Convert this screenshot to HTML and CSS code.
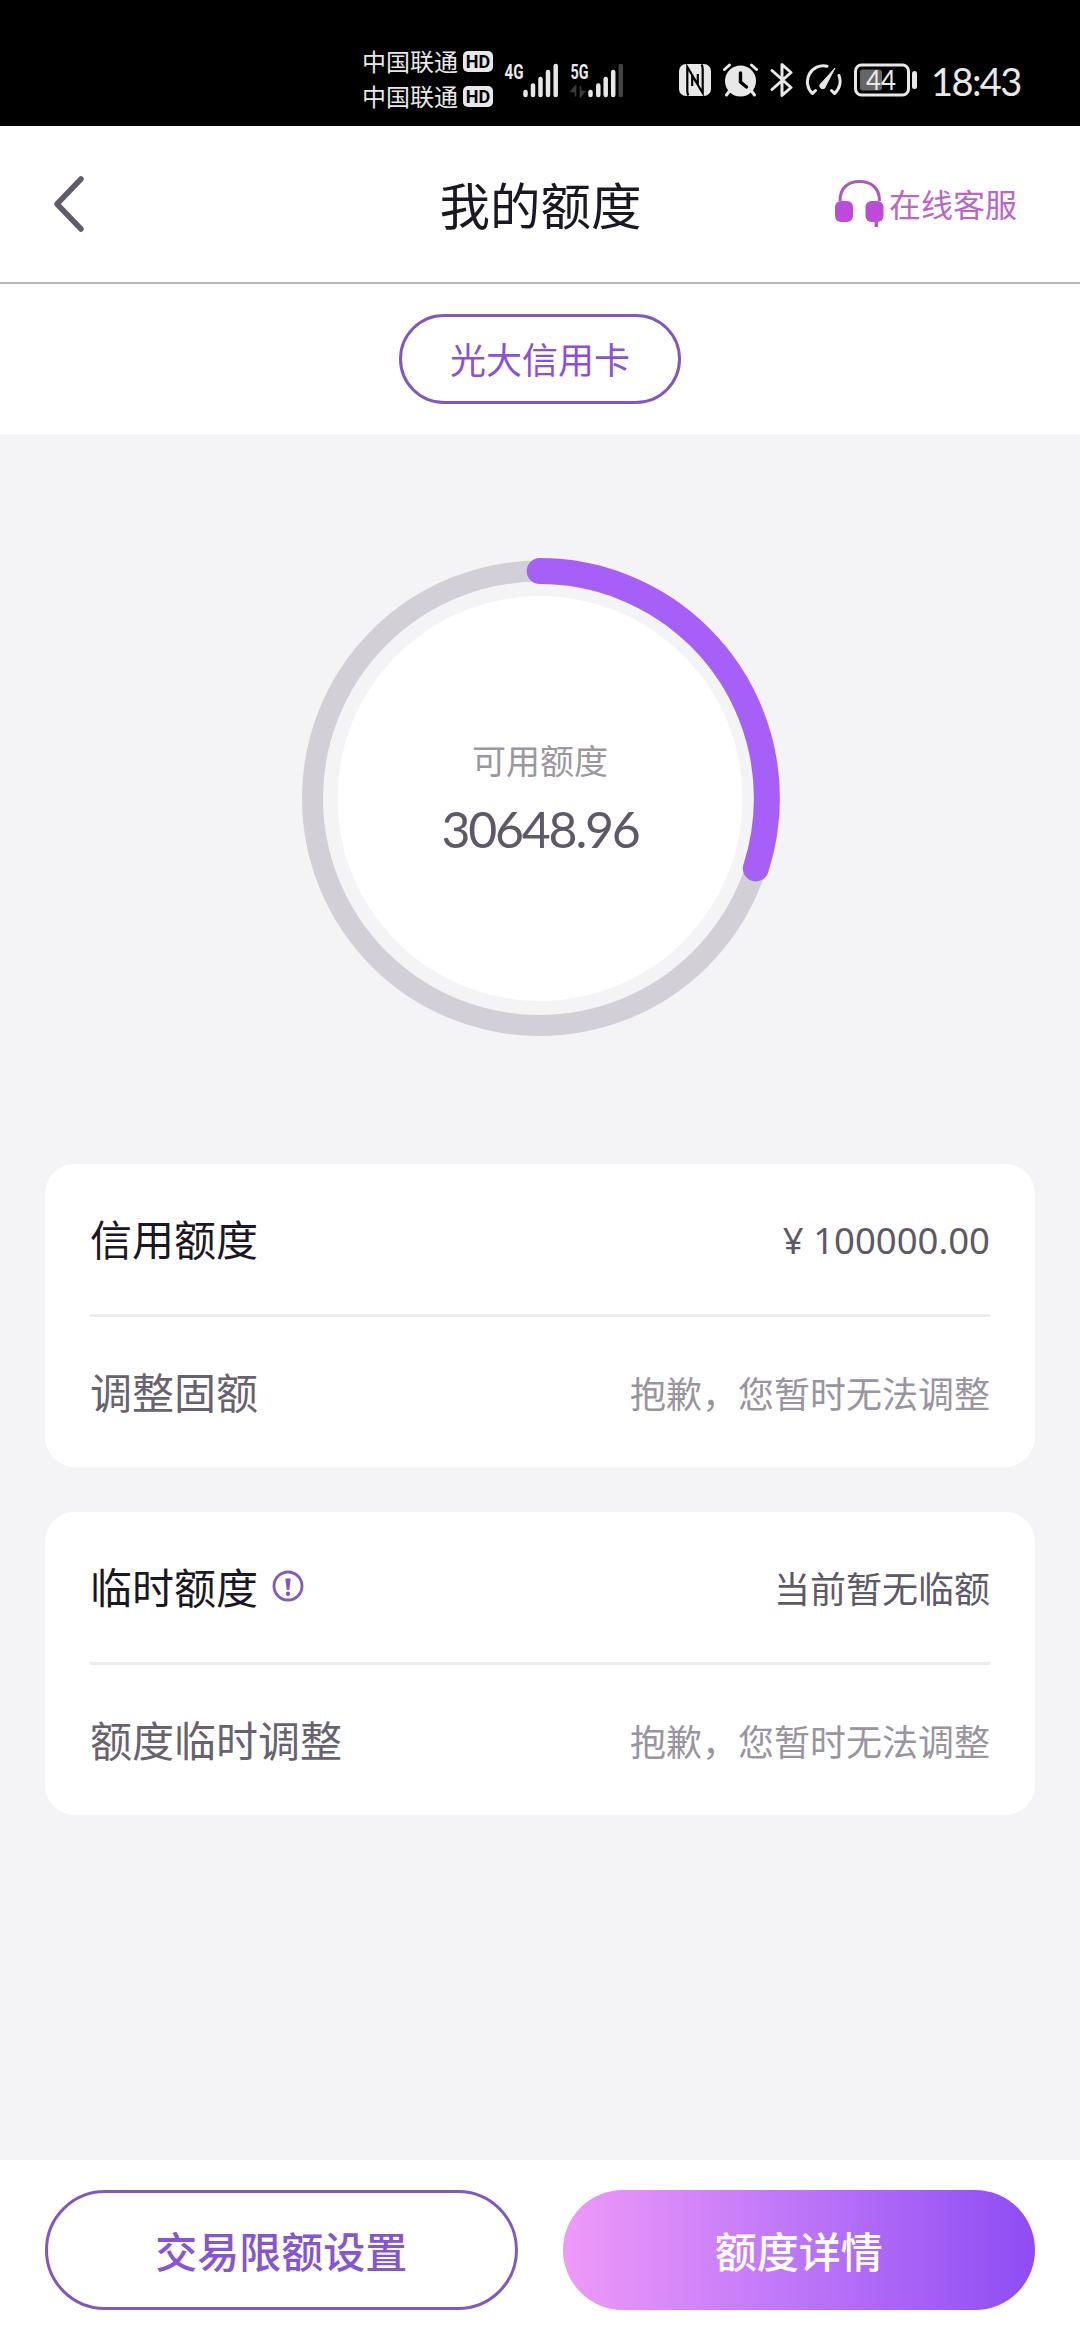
FILE: index.html
```html
<!DOCTYPE html>
<html lang="zh-CN">
<head>
<meta charset="utf-8">
<title>我的额度</title>
<link rel="stylesheet" href="styles.css">
</head>
<body>
<div class="status">
  <div class="carriers">
    <div class="carrier"><span>中国联通</span><b class="hd">HD</b></div>
    <div class="carrier"><span>中国联通</span><b class="hd">HD</b></div>
  </div>
  <svg class="signals" width="122" height="40" viewBox="502 58 122 40">
    <g class="net"><text x="504.500" y="77" textLength="19" lengthAdjust="spacingAndGlyphs">4G</text><text x="570.500" y="77" textLength="18" lengthAdjust="spacingAndGlyphs">5G</text></g>
    <g class="bars"><path d="M525.500 90v3M533 83.500v9.500M540.500 77v16M548 70v23M555.700 64v29M590.500 90v3M598.300 83.500v9.500M605.700 77v16M613.200 70v23"/><path class="dim" d="M620.800 64v29"/></g>
    <path class="updown" d="M575.500 94.500V84L571 89.500h4.500M580.500 84V94.500l4-5h-4"/>
  </svg>
  <svg class="nfc" width="32" height="32" viewBox="0 0 32 32"><rect width="32" height="32" rx="7" fill="#e8e8e8"/><path d="M9.500 31.500Q8.300 30 8.300 27V3L18.800 20.500V10M22.500 .5Q23.700 2 23.700 5V29L13.200 11.500V22" fill="none" stroke="#000" stroke-width="2.200"/></svg>
  <svg class="alarm" width="35" height="34" viewBox="0 0 35 34"><circle cx="17.500" cy="18" r="15.500" fill="#e8e8e8"/><path d="M1.500 6.500L6.500 2M33.500 6.500L28.500 2M6.500 28L3.500 32M28.500 28l3 4" stroke="#e8e8e8" stroke-width="3" stroke-linecap="round"/><path d="M17.500 10v9l6 5" fill="none" stroke="#000" stroke-width="3.400" stroke-linecap="round"/></svg>
  <svg class="bt" width="23" height="36" viewBox="0 0 23 36"><path d="M2 8.500L21 25.500 12 33.500V2.500L21 10.500 2 27.500" fill="none" stroke="#e8e8e8" stroke-width="3" stroke-linecap="round" stroke-linejoin="round"/></svg>
  <svg class="gauge" width="37" height="34" viewBox="0 0 37 34"><path d="M22 3.200A16 16 0 0 0 7.500 30.500L10.500 27.500M34 12.500A16 16 0 0 1 29.500 30.500L26.500 27.500" fill="none" stroke="#e8e8e8" stroke-width="3" stroke-linecap="round" stroke-linejoin="round"/><path d="M30 5L16.500 20a3 3 0 1 0 4.200 3z" fill="#e8e8e8" stroke="#e8e8e8" stroke-linejoin="round"/></svg>
  <svg class="battery" width="64" height="34" viewBox="0 0 64 34"><rect x="1.500" y="2" width="53" height="30" rx="6" fill="none" stroke="#e8e8e8" stroke-width="3"/><rect x="6" y="6.500" width="22" height="21" rx="3" fill="#666"/><rect x="58" y="8" width="5" height="18" rx="2.500" fill="#e8e8e8"/><text x="12" y="27" textLength="30" lengthAdjust="spacingAndGlyphs">44</text></svg>
  <span class="clock">18:43</span>
</div>

<header class="header">
  <svg class="back" width="34" height="60" viewBox="0 0 34 60"><path d="M29 5L5 30l24 25" fill="none" stroke="#625b6a" stroke-width="5.500" stroke-linecap="round" stroke-linejoin="round"/></svg>
  <h1 class="title">我的额度</h1>
  <div class="service">
    <svg class="phones" width="49" height="50" viewBox="0 0 49 50"><path d="M5 22C5 8 14 2.500 24.500 2.500S44.500 8 44.500 22" fill="none" stroke="#a95cb8" stroke-width="3"/><path d="M41.300 42v6" stroke="#b752cb" stroke-width="3.500"/><rect x="0" y="22" width="18" height="21" rx="6" fill="#bd4bd8"/><rect x="30.500" y="22" width="18" height="21" rx="6" fill="#bd4bd8"/></svg>
    <span class="service-text">在线客服</span>
  </div>
</header>

<div class="tabs"><div class="pill">光大信用卡</div></div>

<main class="main">
  <section class="ring">
    <svg class="dial" width="480" height="480" viewBox="0 0 480 480">
      <circle cx="240" cy="240.500" r="202.500" fill="#fff"/>
      <circle cx="239.700" cy="240.300" r="227.200" fill="none" stroke="#d2cfd7" stroke-width="21"/>
      <circle cx="239.700" cy="240.300" r="227.200" fill="none" stroke="#a660f7" stroke-width="26" stroke-linecap="round" pathLength="100" stroke-dasharray="30 70" transform="rotate(-90 239.700 240.300)"/>
    </svg>
    <div class="amount">
      <span class="label">可用额度</span>
      <span class="number">30648.96</span>
    </div>
  </section>

  <section class="card">
    <div class="row"><span class="name">信用额度</span><span class="value money">¥ 100000.00</span></div>
    <div class="row minor"><span class="name">调整固额</span><span class="value">抱歉，您暂时无法调整</span></div>
  </section>
  <section class="card">
    <div class="row"><span class="name">临时额度</span><svg class="info" width="32" height="32" viewBox="0 0 32 32"><circle cx="16" cy="16" r="14" fill="none" stroke="#8457c4" stroke-width="2.800"/><path d="M13.300 8.800Q16 7.500 18.700 8.800L17.300 20h-2.600z" fill="#8457c4"/><circle cx="16" cy="23.800" r="2.200" fill="#8457c4"/></svg><span class="value">当前暂无临额</span></div>
    <div class="row minor"><span class="name">额度临时调整</span><span class="value">抱歉，您暂时无法调整</span></div>
  </section>
</main>

<footer class="actions">
  <div class="btn outline">交易限额设置</div>
  <div class="btn filled">额度详情</div>
</footer>
</body>
</html>
```
FILE: styles.css
```css
* { box-sizing: border-box; }
body {
  margin: 0;
  width: 1080px;
  height: 2340px;
  display: flex;
  flex-direction: column;
  overflow: hidden;
  background: #fff;
  color: #1b1724;
  font-family: "Noto Sans CJK SC", sans-serif;
}
svg { display: block; flex: none; }

.status {
  height: 126px;
  flex: none;
  display: flex;
  align-items: center;
  padding: 33px 0 0 362px;
  background: #000;
  color: #e8e8e8;
}
.carriers { width: 140px; padding-bottom: 1px; }
.carrier { display: flex; align-items: center; gap: 5px; height: 35px; font-size: 24px; line-height: 35px; }
.carrier span { padding-bottom: 2px; }
.hd {
  width: 30px;
  height: 21px;
  border-radius: 5px;
  background: #e8e8e8;
  color: #000;
  font: bold 18px/21px "Roboto", sans-serif;
  text-align: center;
}
.net text { font: bold 20px "Roboto", sans-serif; fill: #e8e8e8; }
.bars { fill: none; stroke: #e8e8e8; stroke-width: 4.500; stroke-linecap: round; }
.dim { stroke: #444; }
.updown { fill: #3c3c3c; stroke: #3c3c3c; stroke-width: 1.500; }
.nfc { margin-left: 55px; }
.alarm { margin-left: 12px; }
.bt { margin-left: 12px; }
.gauge { margin-left: 12px; }
.battery { margin-left: 12px; }
.battery text { font: 26px "Lato", sans-serif; fill: #e8e8e8; }
.clock { margin-left: 13px; padding-top: 2px; font: 38px/46px "Lato", sans-serif; letter-spacing: -1.600px; }

.header {
  height: 158px;
  flex: none;
  display: grid;
  grid-template-columns: 1fr auto 1fr;
  align-items: center;
  padding: 0 63px 0 52px;
  border-bottom: 2px solid #b8b8b8;
}
.title { margin: 0 0 0 12px; padding-bottom: 2px; font-size: 50.500px; line-height: 72px; font-weight: 400; }
.service { justify-self: end; display: flex; align-items: center; gap: 5px; color: #b866ca; font-size: 32px; line-height: 46px; }
.service-text { padding-bottom: 3px; }

.tabs { height: 150px; flex: none; display: flex; justify-content: center; align-items: center; }
.pill {
  width: 282px;
  height: 90px;
  border: 3px solid #8258c0;
  border-radius: 45px;
  color: #8a4fdc;
  font-size: 36px;
  line-height: 83px;
  text-align: center;
}

.main { flex: 1; background: #f4f4f6; padding: 124px 45px 0; }
.ring { display: grid; place-items: center; height: 480px; margin-bottom: 126px; }
.dial, .amount { grid-area: 1 / 1; }
.amount { display: flex; flex-direction: column; align-items: center; padding-top: 2px; }
.label { color: #9b96a0; font-size: 34px; line-height: 60px; }
.number { color: #5f5868; font: 50px/78px "Lato", sans-serif; letter-spacing: -2.200px; }

.card { height: 303px; margin-bottom: 45px; padding: 0 45px; border-radius: 30px; background: #fff; }
.row { height: 150px; display: flex; align-items: center; }
.minor { height: 153px; border-top: 3px solid #ededee; }
.name { padding-bottom: 2px; font-size: 42px; line-height: 60px; }
.value { margin-left: auto; padding-bottom: 1px; color: #5f5868; font-size: 36px; line-height: 52px; }
.money { padding: 2px 0 0; font-family: "Noto Sans", sans-serif; font-size: 36.500px; }
.minor .name { color: #686170; }
.minor .value { color: #99949f; }
.info { margin: -2px 0 0 14px; }

.actions { height: 180px; flex: none; display: grid; grid-template-columns: 1fr 1fr; gap: 45px; padding: 30px 45px; }
.btn { height: 120px; border-radius: 60px; font-size: 42px; font-weight: 500; line-height: 119px; text-align: center; }
.outline { border: 3px solid #8258c0; color: #8655d2; line-height: 113px; }
.filled { color: #fff; background: linear-gradient(90deg, #ef9af9, #bd75f8 50%, #8e4cf3); }
```
